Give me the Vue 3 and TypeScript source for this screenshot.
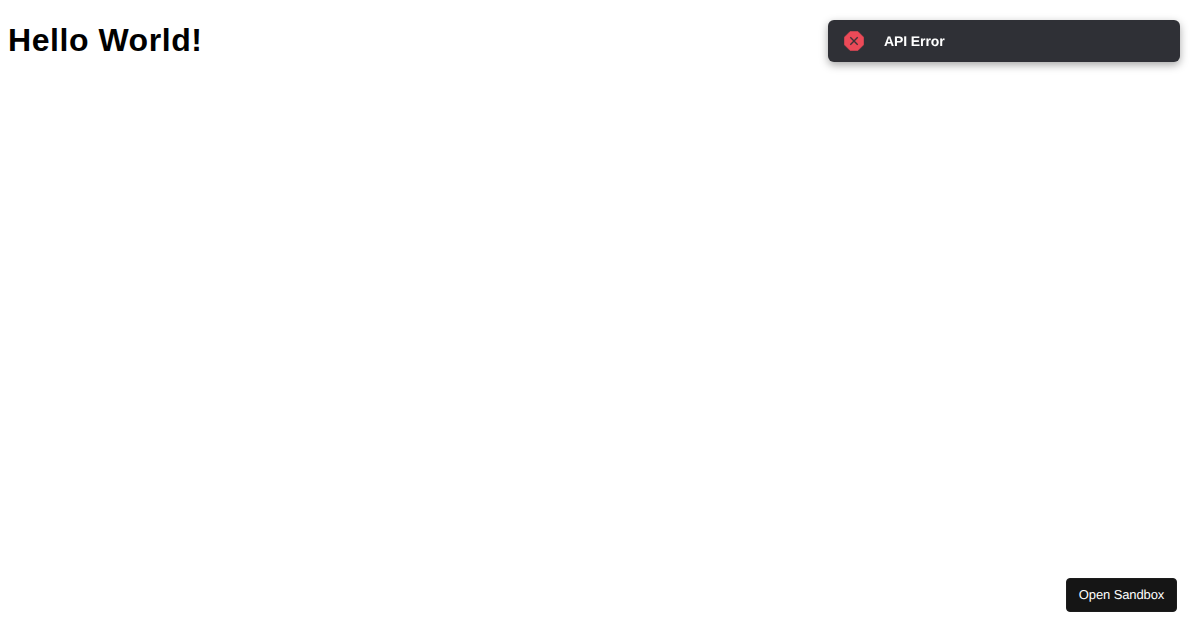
<script setup lang="ts">
const title: string = 'Hello World!'
</script>

<template>
  <div class="page">
    <h1 class="title">{{ title }}</h1>
    <div class="toast" role="alert">
      <svg class="toast-icon" viewBox="0 0 20 20" width="20" height="20" aria-hidden="true">
        <path d="M6.2 0.4h7.6l5.8 5.8v7.6l-5.8 5.8H6.2L0.4 13.8V6.2z" fill="#ec4a58" stroke="#ec4a58" stroke-width="0.6" stroke-linejoin="round" />
        <path d="M6.3 6.3l7.4 7.4M13.7 6.3l-7.4 7.4" fill="none" stroke="#3f3238" stroke-width="1.4" />
      </svg>
      <span class="toast-text">API Error</span>
    </div>
    <button class="sandbox" type="button">Open Sandbox</button>
  </div>
</template>

<style scoped>
.page {
  padding: 8px;
  background: #fff;
}
.title {
  margin: 13.5px 0 0;
  font: 700 32px/37px "Liberation Sans", Arial, sans-serif;
  letter-spacing: 0.55px;
  color: #000;
}
.toast {
  position: fixed;
  top: 20px;
  right: 20px;
  width: 352px;
  height: 42px;
  box-sizing: border-box;
  padding: 0 16px;
  display: flex;
  align-items: center;
  gap: 20px;
  background: #2f3036;
  border-radius: 6px;
  box-shadow: 0 3px 8px rgba(0, 0, 0, 0.35);
}
.toast-icon {
  flex: none;
}
.toast-text {
  font: 700 14px/20px "Liberation Sans", Arial, sans-serif;
  text-rendering: geometricPrecision;
  letter-spacing: -0.1px;
  color: #fff;
}
.sandbox {
  position: fixed;
  right: 23px;
  bottom: 18px;
  width: 111px;
  height: 34px;
  padding: 0;
  border: 1px solid #1c1c1c;
  border-radius: 4px;
  background: #151515;
  color: #fff;
  font: 400 13px/16px "Liberation Sans", Arial, sans-serif;
  text-rendering: geometricPrecision;
  letter-spacing: -0.12px;
}
</style>
